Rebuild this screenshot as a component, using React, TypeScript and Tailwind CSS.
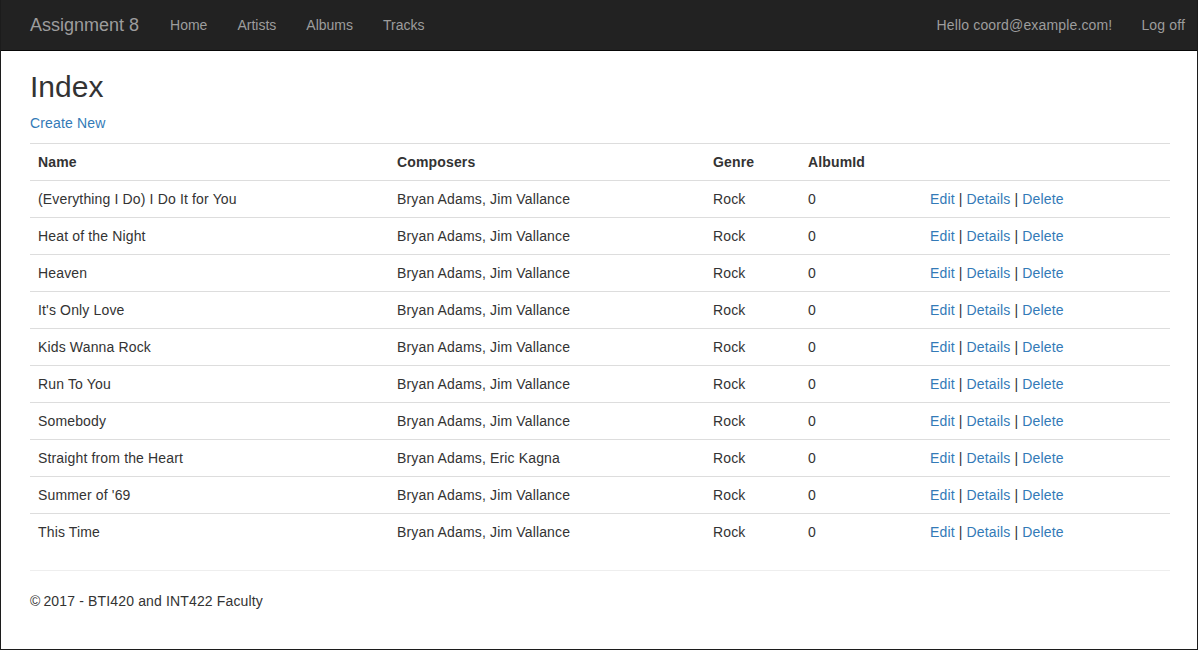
import React from "react";

const rows: [string, string][] = [
  ["(Everything I Do) I Do It for You", "Bryan Adams, Jim Vallance"],
  ["Heat of the Night", "Bryan Adams, Jim Vallance"],
  ["Heaven", "Bryan Adams, Jim Vallance"],
  ["It's Only Love", "Bryan Adams, Jim Vallance"],
  ["Kids Wanna Rock", "Bryan Adams, Jim Vallance"],
  ["Run To You", "Bryan Adams, Jim Vallance"],
  ["Somebody", "Bryan Adams, Jim Vallance"],
  ["Straight from the Heart", "Bryan Adams, Eric Kagna"],
  ["Summer of '69", "Bryan Adams, Jim Vallance"],
  ["This Time", "Bryan Adams, Jim Vallance"],
];

export default function App() {
  return (
    <div
      className="w-[1198px] h-[650px] flex flex-col bg-white border-x border-b border-[#1c1c1c] overflow-hidden text-[14px] text-[#333] tracking-[0.15px]"
      style={{ fontFamily: '"Liberation Sans", Arial, sans-serif' }}
    >
      <nav className="h-[51px] shrink-0 bg-[#222] border-b border-[#080808] flex items-center justify-between pl-[14px] -mx-px">
        <div className="flex items-center tracking-normal">
          <a className="px-[16px] text-[18px] leading-[20px] text-[#9d9d9d]">Assignment 8</a>
          <a className="px-[15px] leading-[20px] text-[#9d9d9d]">Home</a>
          <a className="px-[15px] leading-[20px] text-[#9d9d9d]">Artists</a>
          <a className="px-[15px] leading-[20px] text-[#9d9d9d]">Albums</a>
          <a className="px-[15px] leading-[20px] text-[#9d9d9d]">Tracks</a>
        </div>
        <div className="flex items-center">
          <a className="px-[15px] leading-[20px] text-[#9d9d9d]">Hello coord@example.com!</a>
          <a className="pl-[14px] pr-[13px] leading-[20px] text-[#9d9d9d]">Log off</a>
        </div>
      </nav>
      <div className="px-[29px] flex flex-col">
        <h2 className="mt-[19px] mb-[10px] text-[30px] leading-[33px] font-normal tracking-normal text-[#333]">Index</h2>
        <p className="leading-[20px] mb-[10px]">
          <a className="text-[#337ab7]">Create New</a>
        </p>
        <table className="w-[1140px] border-collapse table-fixed">
          <colgroup>
            <col className="w-[359px]" />
            <col className="w-[316px]" />
            <col className="w-[95px]" />
            <col className="w-[122px]" />
            <col />
          </colgroup>
          <thead>
            <tr>
              {["Name", "Composers", "Genre", "AlbumId", ""].map((h, i) => (
                <th
                  key={i}
                  className="text-left font-bold px-[8px] py-[8px] leading-[20px] border-t border-b border-[#ddd]"
                >
                  {h}
                </th>
              ))}
            </tr>
          </thead>
          <tbody>
            {rows.map(([name, comp]) => (
              <tr key={name}>
                <td className="px-[8px] py-[8px] leading-[20px] border-t border-[#ddd]">{name}</td>
                <td className="px-[8px] py-[8px] leading-[20px] border-t border-[#ddd]">{comp}</td>
                <td className="px-[8px] py-[8px] leading-[20px] border-t border-[#ddd]">Rock</td>
                <td className="px-[8px] py-[8px] leading-[20px] border-t border-[#ddd]">0</td>
                <td className="px-[8px] py-[8px] leading-[20px] border-t border-[#ddd]">
                  <a className="text-[#337ab7]">Edit</a> | <a className="text-[#337ab7]">Details</a> |{" "}
                  <a className="text-[#337ab7]">Delete</a>
                </td>
              </tr>
            ))}
          </tbody>
        </table>
        <hr className="mt-[20px] mb-[20px] border-0 border-t border-[#eee] w-[1140px]" />
        <footer>
          <p className="leading-[20px]">©&#8201;2017 - BTI420 and INT422 Faculty</p>
        </footer>
      </div>
    </div>
  );
}
